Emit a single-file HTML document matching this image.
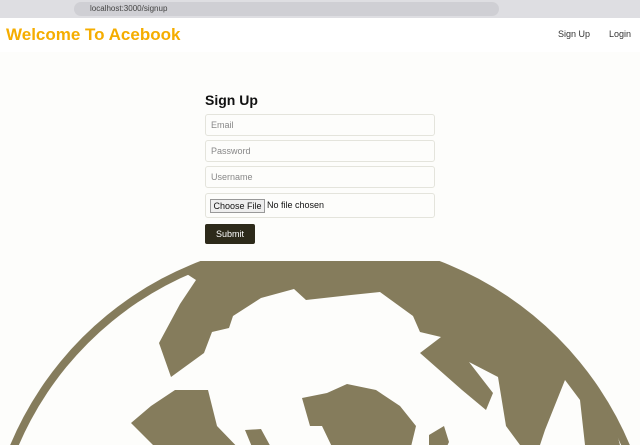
<!DOCTYPE html>
<html><head><style>
body{margin:0;width:640px;height:445px;overflow:hidden;background:#fdfdfb;font-family:"Liberation Sans",sans-serif;position:relative}
.chrome{position:absolute;left:0;top:0;width:640px;height:18px;background:#dedee2}
.url{position:absolute;left:74px;top:2px;width:425px;height:14px;border-radius:7px;background:#cfcfd4;font-size:8px;color:#444;line-height:14px;text-indent:16px}
.hdr{position:absolute;left:0;top:18px;width:640px;height:34px;background:#fff}
.title{position:absolute;left:6px;top:25px;font-size:17px;font-weight:bold;color:#f5ad00}
.nav{position:absolute;top:29px;font-size:9px;color:#333}
h2{position:absolute;left:205px;top:92px;margin:0;font-size:14px;font-weight:bold;color:#111}
.in{position:absolute;left:205px;width:228px;height:20px;border:1px solid #e4e4dc;border-radius:3px;background:#fdfdfb;font-size:9px;color:#888;line-height:20px;text-indent:5px}
.btn{position:absolute;left:205px;top:224px;width:50px;height:20px;background:#2d2a1a;border-radius:2px;color:#fff;font-size:9px;text-align:center;line-height:20px}
.cf{position:absolute;left:210px;top:199px;width:53px;height:12px;border:1px solid #999;background:#eee;font-size:9px;line-height:12px;text-align:center;color:#111}
</style></head><body>
<div class="chrome"><div class="url">localhost:3000/signup</div></div>
<div class="hdr"></div>
<div class="title">Welcome To Acebook</div>
<div class="nav" style="left:558px">Sign Up</div>
<div class="nav" style="left:609px">Login</div>
<h2>Sign Up</h2>
<div class="in" style="top:114px">Email</div>
<div class="in" style="top:140px">Password</div>
<div class="in" style="top:166px">Username</div>
<div class="in" style="top:193px;height:23px"></div>
<div class="cf">Choose File</div>
<div style="position:absolute;left:267px;top:200px;font-size:9px;color:#111">No file chosen</div>
<div class="btn">Submit</div>
<svg style="position:absolute;left:0;top:0" width="640" height="445">
<defs>
<clipPath id="c"><rect x="0" y="261" width="640" height="184"/></clipPath>
<clipPath id="d"><circle cx="320" cy="575" r="330"/></clipPath>
</defs>
<g clip-path="url(#c)" fill="#857c5c">
<circle cx="320" cy="575" r="336"/>
<circle cx="320" cy="575" r="328" fill="#fdfdfb"/>
<g clip-path="url(#d)">
<polygon points="150,250 500,250 560,300 600,370 620,445 585,445 580,400 565,380 545,430 540,445 520,445 506,426 498,377 469,362 493,393 486,410 462,390 420,353 441,337 420,332 413,316 380,292 351,295 306,300 294,289 261,298 233,316 229,328 212,332 204,353 171,377 159,343 180,304 196,280"/>
<polygon points="131,423 151,406 175,390 208,390 217,426 245,455 200,470 168,460"/>
<polygon points="302,398 327,393 347,384 376,390 400,406 416,426 408,459 355,488 334,451 322,426 310,426"/>
<polygon points="245,430 261,429 273,451 282,455 285,467 278,472 257,459"/>
<polygon points="298,455 315,451 339,467 343,488 310,484"/>
<polygon points="429,435 444,426 449,442 441,459 429,455"/>
</g>
</g>
</svg>
</body></html>
